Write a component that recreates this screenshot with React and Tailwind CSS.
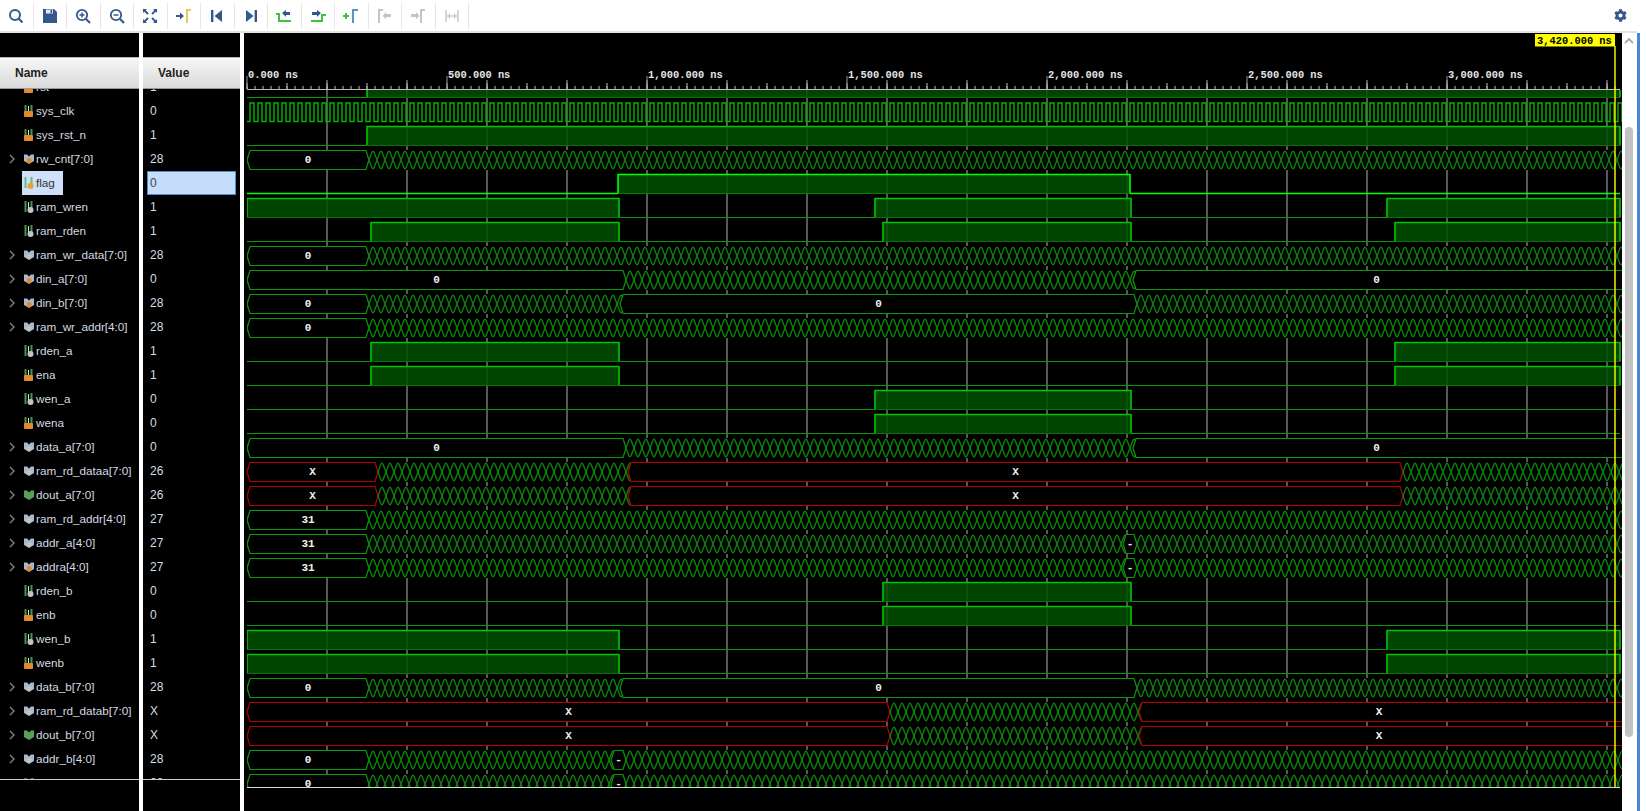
import React from "react";
import { FaCog } from "react-icons/fa";

const NAVY = "#33588f";
const Svg = ({ children }) => (
  <svg width="18" height="18" viewBox="0 0 18 18" fill="none">{children}</svg>
);
const toolIcons = [
  <Svg><circle cx="8" cy="8" r="5" stroke={NAVY} strokeWidth="2" /><path d="M11.5 11.5L15.5 15.5" stroke={NAVY} strokeWidth="2.2" /></Svg>,
  <Svg><path d="M2 2H13L16 5V16H2Z" fill={NAVY} /><rect x="5" y="2.5" width="7" height="4" fill="#e8eef6" /><rect x="9.5" y="3" width="1.6" height="3" fill={NAVY} /></Svg>,
  <Svg><circle cx="8" cy="8" r="5.2" stroke={NAVY} strokeWidth="1.8" /><path d="M5.5 8H10.5M8 5.5V10.5" stroke={NAVY} strokeWidth="1.5" /><path d="M12 12L16 16" stroke={NAVY} strokeWidth="2.2" /></Svg>,
  <Svg><circle cx="8" cy="8" r="5.2" stroke={NAVY} strokeWidth="1.8" /><path d="M5.5 8H10.5" stroke={NAVY} strokeWidth="1.5" /><path d="M12 12L16 16" stroke={NAVY} strokeWidth="2.2" /></Svg>,
  <Svg><path d="M3 3L7 7M15 3L11 7M3 15L7 11M15 15L11 11" stroke={NAVY} strokeWidth="1.8" /><path d="M2 2H6L2 6ZM16 2H12L16 6ZM2 16H6L2 12ZM16 16H12L16 12Z" fill={NAVY} /></Svg>,
  <Svg><path d="M1 8H5V5.5L9 9L5 12.5V10H1Z" fill={NAVY} /><path d="M12 16V3H16" stroke="#e8c860" strokeWidth="2" /></Svg>,
  <Svg><rect x="3" y="3" width="2.4" height="12" fill={NAVY} /><path d="M14 3V15L6.5 9Z" fill={NAVY} /></Svg>,
  <Svg><rect x="12.6" y="3" width="2.4" height="12" fill={NAVY} /><path d="M4 3V15L11.5 9Z" fill={NAVY} /></Svg>,
  <Svg><path d="M1 7H4V14H16" stroke="#3cc43c" strokeWidth="2" /><path d="M7 6L11 3V5H15V8H11V10Z" fill={NAVY} /></Svg>,
  <Svg><path d="M2 14H13V8H17" stroke="#3cc43c" strokeWidth="2" /><path d="M12 6L8 3V5H3V8H8V10Z" fill={NAVY} /></Svg>,
  <Svg><path d="M1 9H7M4 6V12" stroke="#3cc43c" strokeWidth="2" /><path d="M11 16V3H16" stroke="#5b93c4" strokeWidth="2" /></Svg>,
  <Svg><path d="M3 16V3H7" stroke="#c4c4c4" strokeWidth="2" /><path d="M15 7H10V5L6.5 9L10 12V10H15Z" fill="#c4c4c4" /></Svg>,
  <Svg><path d="M12 16V3H16" stroke="#c4c4c4" strokeWidth="2" /><path d="M2 7H7V5L10.5 9L7 12V10H2Z" fill="#c4c4c4" /></Svg>,
  <Svg><path d="M3 3V15M15 3V15M4 9H14" stroke="#cccccc" strokeWidth="1.6" /><path d="M4 9L7 6V12ZM14 9L11 6V12Z" fill="#cccccc" /></Svg>,
];

const sig = [
  ["rst", "1", "b", "orange"], ["sys_clk", "0", "b", "orange"], ["sys_rst_n", "1", "b", "orange"],
  ["rw_cnt[7:0]", "28", "v", "orange"], ["flag", "0", "b", "flag"], ["ram_wren", "1", "b", "gray"],
  ["ram_rden", "1", "b", "gray"], ["ram_wr_data[7:0]", "28", "v", "gray"], ["din_a[7:0]", "0", "v", "orange"],
  ["din_b[7:0]", "28", "v", "orange"], ["ram_wr_addr[4:0]", "28", "v", "gray"], ["rden_a", "1", "b", "gray"],
  ["ena", "1", "b", "orange"], ["wen_a", "0", "b", "gray"], ["wena", "0", "b", "orange"],
  ["data_a[7:0]", "0", "v", "gray"], ["ram_rd_dataa[7:0]", "26", "v", "gray"], ["dout_a[7:0]", "26", "v", "green"],
  ["ram_rd_addr[4:0]", "27", "v", "gray"], ["addr_a[4:0]", "27", "v", "gray"], ["addra[4:0]", "27", "v", "orange"],
  ["rden_b", "0", "b", "gray"], ["enb", "0", "b", "orange"], ["wen_b", "1", "b", "gray"],
  ["wenb", "1", "b", "orange"], ["data_b[7:0]", "28", "v", "gray"], ["ram_rd_datab[7:0]", "X", "v", "gray"],
  ["dout_b[7:0]", "X", "v", "green"], ["addr_b[4:0]", "28", "v", "gray"], ["addrb[4:0]", "28", "v", "orange"],
];

function SigIcon({ type, tone }) {
  const dot = { orange: "#e08a2c", gray: "#c4c4c4", green: "#58a058", flag: "#e8a030" }[tone];
  if (type === "b") {
    return (
      <svg width="12" height="14" viewBox="0 0 12 14" className="shrink-0">
        <path d="M2.5 1V12M8.5 1V12" stroke={tone === "flag" ? "#60c080" : "#3f9a4a"} strokeWidth="2" />
        <path d="M5.5 2V8" stroke="#d8d8d8" strokeWidth="1" />
        {tone === "orange" ? <rect x="1" y="7" width="9" height="6" rx="1" fill={dot} /> : <circle cx="7.5" cy="10" r="3" fill={dot} />}
      </svg>
    );
  }
  return (
    <svg width="12" height="14" viewBox="0 0 12 14" className="shrink-0">
      <path d="M1 2.5H4L6 4.5L8 2.5H11V9L6 12L1 9Z" fill={tone === "green" ? "#58a058" : "#a8b8cc"} />
      <circle cx="6" cy="8.5" r="2.6" fill={dot} />
    </svg>
  );
}

const L = 247;
const R = 1620;
const top = (i) => 102.5 + 24 * (i - 1);
const bot = (i) => top(i) + 19;

// digital: level at start, then the edges
const dig = {
  0: [0, 367], 2: [0, 367],
  4: [0, 618, 1130],
  5: [1, 619, 875, 1131, 1387], 6: [0, 371, 619, 883, 1131, 1395],
  11: [0, 371, 619, 1395], 12: [0, 371, 619, 1395],
  13: [0, 875, 1131], 14: [0, 875, 1131],
  21: [0, 883, 1131], 22: [0, 883, 1131],
  23: [1, 619, 1387], 24: [1, 619, 1387],
};
// bus: flat segments with label; anything between them is drawn as changing data
const G = "#0a9a0a";
const Rd = "#b40000";
const zeroThenX = [[L, 369, "0", G]];
const din = [[L, 626, "0", G], [1133, 1640, "0", G]];
const dinb = [[L, 369, "0", G], [620, 1137, "0", G]];
const rdA = [[L, 378, "X", Rd], [628, 1403, "X", Rd]];
const rdB = [[L, 890, "X", Rd], [1139, 1640, "X", Rd, 1379]];
const addrA = [[L, 369, "31", G], [1123, 1137, "-", G]];
const addrB = [[L, 369, "0", G], [611, 626, "-", G]];
const bus = {
  3: zeroThenX, 7: zeroThenX, 8: din, 9: dinb, 10: zeroThenX, 15: din, 16: rdA, 17: rdA,
  18: [[L, 369, "31", G]], 19: addrA, 20: addrA, 25: dinb, 26: rdB, 27: rdB, 28: addrB, 29: addrB,
};

function digitalRow(i, spec) {
  const t = top(i);
  const b = bot(i);
  const [first, ...edges] = spec;
  const pts = [L, ...edges, R];
  const flag = i === 4;
  const bright = flag ? "#00ff00" : "#00c800";
  const out = [];
  let lvl = first;
  for (let k = 0; k < pts.length - 1; k++) {
    const a = pts[k];
    const c = pts[k + 1];
    if (lvl) {
      out.push(<rect key={"f" + k} x={a} y={t} width={c - a} height={b - t} fill="#005000" fillOpacity="0.86" />);
      out.push(<path key={"h" + k} d={`M${a} ${b}V${t}H${c}V${b}`} stroke={bright} strokeWidth="1.6" fill="none" />);
      out.push(<path key={"d" + k} d={`M${a} ${b}H${c}`} stroke={flag ? "#0a7a0a" : "#0a6e0a"} strokeWidth="1.2" />);
    } else {
      out.push(<path key={"l" + k} d={`M${a} ${b}H${c}`} stroke={flag ? bright : "#0a9a0a"} strokeWidth={flag ? 1.6 : 1.2} />);
    }
    lvl = 1 - lvl;
  }
  return <g key={i}>{out}</g>;
}

function crossPath(a, c, t, b) {
  const m = (t + b) / 2;
  let up = `M${a} ${m}`;
  let dn = `M${a} ${m}`;
  for (let x = a; x < c; x += 8) {
    up += `L${x + 2.9} ${t + 2}Q${x + 4} ${t - 0.8} ${x + 5.1} ${t + 2}L${x + 8} ${m}`;
    dn += `L${x + 2.9} ${b - 2}Q${x + 4} ${b + 0.8} ${x + 5.1} ${b - 2}L${x + 8} ${m}`;
  }
  return up + dn;
}

function busRow(i, segs) {
  const t = top(i);
  const b = bot(i);
  const m = (t + b) / 2;
  const out = [<rect key="bg" x={L} y={t - 0.5} width={R + 2 - L} height={b - t + 1} fill="#000" />];
  let cur = L;
  segs.forEach(([a, c, label, color, lx], k) => {
    if (a > cur) out.push(<path key={"x" + k} d={crossPath(cur, a, t, b)} stroke="#0a8c0a" strokeWidth="1.25" fill="none" />);
    const cx = lx || (a + Math.min(c, R)) / 2;
    out.push(
      <path
        key={"s" + k}
        d={`M${a} ${m}L${a + 3} ${t}H${c - 3}L${c} ${m}L${c - 3} ${b}H${a + 3}Z`}
        stroke={color}
        strokeWidth="1.2"
        fill="#000"
      />
    );
    out.push(
      <text key={"t" + k} x={cx} y={m + 2.5} textAnchor="middle" fill="#f0f0f0" className="font-['Liberation_Mono'] text-[11px] font-bold">
        {label}
      </text>
    );
    cur = c;
  });
  if (cur < R) out.push(<path key="xe" d={crossPath(cur, R + 8, t, b)} stroke="#0a8c0a" strokeWidth="1.25" fill="none" />);
  return <g key={i}>{out}</g>;
}

function Waves() {
  const minor = [];
  for (let x = L; x < R; x += 8) minor.push(`M${x} 86V89`);
  for (let x = L; x < R; x += 40) minor.push(`M${x} 83V89`);
  const grid = [];
  for (let x = L + 80; x < R; x += 80) grid.push(`M${x} 80V787`);
  const major = [];
  for (let x = L; x < R; x += 200) major.push(`M${x} 76V89`);
  const labels = ["0.000 ns", "500.000 ns", "1,000.000 ns", "1,500.000 ns", "2,000.000 ns", "2,500.000 ns", "3,000.000 ns"];
  let clk = `M${L} 121.5H250`;
  for (let x = 250; x < R; x += 8) clk += `V103H${x + 4}V121.5H${x + 8}`;
  return (
    <svg width="1378" height="778" viewBox="244 33 1378 778" className="block shrink-0">
      <defs>
        <clipPath id="plot"><rect x={L} y="90" width={R + 2 - L} height="697" /></clipPath>
      </defs>
      <path d={grid.join("")} stroke="#767676" strokeWidth="1.5" />
      <g clipPath="url(#plot)">
        <path d={clk} stroke="#00b800" strokeWidth="1.4" fill="none" />
        {Object.entries(dig).map(([i, s]) => digitalRow(+i, s))}
        {Object.entries(bus).map(([i, s]) => busRow(+i, s))}
      </g>
      <path d={`M${L} 89.5H${R}`} stroke="#bdbdbd" strokeWidth="1" />
      <path d={minor.join("")} stroke="#b8b8b8" strokeWidth="1" />
      <path d={major.join("")} stroke="#9a9a9a" strokeWidth="1" />
      {labels.map((t, k) => (
        <text key={t} x={L + 1 + k * 200} y="78" fill="#e4e4e4" className="font-['Liberation_Mono'] text-[10.4px] font-bold">
          {t}
        </text>
      ))}
      <path d={`M${L} 787.5H${R}`} stroke="#d8d8d8" strokeWidth="1" />
      <path d="M1615 46V787" stroke="#ffff00" strokeWidth="1.4" />
      <rect x="1535" y="34" width="80" height="12.5" fill="#ffff00" />
      <text x="1537" y="44" fill="#000" className="font-['Liberation_Mono'] text-[10.4px] font-bold">
        3,420.000 ns
      </text>
    </svg>
  );
}

function Header({ children, className }) {
  return (
    <div className={`h-8 flex items-center bg-gradient-to-b from-[#f7f7f7] to-[#dadada] border-t border-t-[#b8b8b8] border-b border-b-[#9a9a9a] text-[12px] font-bold text-[#222] ${className}`}>
      {children}
    </div>
  );
}

export default function App() {
  return (
    <div className="w-[1646px] h-[811px] overflow-hidden bg-white flex flex-col font-['Liberation_Sans',sans-serif]">
      <div className="h-[33px] shrink-0 flex items-center w-[1637px] border-b-2 border-b-[#e4e4e4]">
        {toolIcons.map((icon, i) => (
          <div key={i} className="w-[33.5px] h-[26px] flex items-center justify-center border-r border-r-[#e6e6e6]">
            {icon}
          </div>
        ))}
        <div className="ml-auto mr-[10px] flex items-center">
          <FaCog size={13} color={NAVY} />
        </div>
      </div>
      <div className="flex-1 flex min-h-0">
        <div className="w-[139px] shrink-0 bg-black flex flex-col">
          <div className="h-6 shrink-0" />
          <Header className="pl-[15px]">Name</Header>
          <div className="h-[690px] overflow-hidden border-b-0">
            <div className="-mt-[14px]">
              {sig.map(([name, , type, tone], i) => (
                <div key={name} className="h-6 flex items-center text-[11.7px]">
                  <span className="w-[22px] shrink-0 flex justify-center pl-[2px]">
                    {type === "v" && (
                      <svg width="8" height="10" viewBox="0 0 8 10"><path d="M2 1L6 5L2 9" stroke="#8a8a8a" strokeWidth="1.2" fill="none" /></svg>
                    )}
                  </span>
                  {name === "flag" ? (
                    <div className="h-6 w-[41px] flex items-center pl-[1px] gap-[1px] bg-[#cfe0fa] text-[#333]">
                      <SigIcon type={type} tone={tone} />
                      <span>{name}</span>
                    </div>
                  ) : (
                    <div className="flex items-center pl-[1px] gap-[1px] text-[#d6dae2] whitespace-nowrap">
                      <SigIcon type={type} tone={tone} />
                      <span>{name}</span>
                    </div>
                  )}
                </div>
              ))}
            </div>
          </div>
          <div className="h-px bg-[#cccccc]" />
        </div>
        <div className="w-1 shrink-0" />
        <div className="w-[97px] shrink-0 bg-black flex flex-col">
          <div className="h-6 shrink-0" />
          <Header className="pl-[15px]">Value</Header>
          <div className="h-[690px] overflow-hidden">
            <div className="-mt-[14px]">
              {sig.map(([name, value]) => (
                <div key={name} className="h-6 flex items-center text-[12px]">
                  {name === "flag" ? (
                    <div className="ml-1 w-[89px] h-6 flex items-center pl-[2px] bg-[#c6dcfb] border border-[#4a90c8] text-[#444]">
                      {value}
                    </div>
                  ) : (
                    <span className="pl-[7px] text-[#d6dae2]">{value}</span>
                  )}
                </div>
              ))}
            </div>
          </div>
          <div className="h-px bg-[#cccccc]" />
        </div>
        <div className="w-1 shrink-0" />
        <div className="w-[1378px] shrink-0 bg-black overflow-hidden">
          <Waves />
        </div>
        <div className="w-[15px] shrink-0 flex flex-col items-center pr-[1px]">
          <svg width="12" height="8" viewBox="0 0 12 8" className="mt-[4px]"><path d="M2 6L6 2L10 6" stroke="#a8a8a8" strokeWidth="1.8" fill="none" /></svg>
          <div className="mt-[82px] w-[8px] h-[610px] rounded-b-[4px] rounded-t-[4px] bg-[#c2c2c2]" />
        </div>
        <div className="w-[2.5px] shrink-0 bg-[#4a86d8]" />
      </div>
    </div>
  );
}
